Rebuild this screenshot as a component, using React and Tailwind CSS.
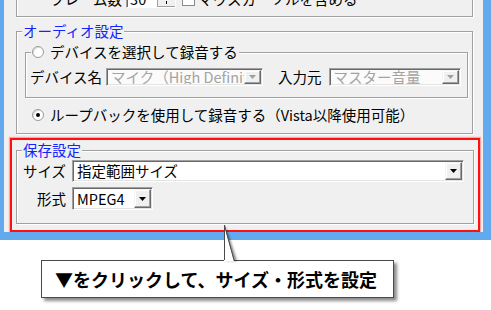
import React from "react";

const font = "font-['Noto_Sans_CJK_JP','Noto_Sans_CJK_SC',sans-serif]";

function DropButton({ disabled }) {
  return (
    <div className="w-[17px] shrink-0 flex items-center justify-center bg-[#f0f0f0] border border-t-[#f4f4f4] border-l-[#f4f4f4] border-b-[#6a6a6a] border-r-[#6a6a6a] shadow-[inset_-1px_-1px_0_#a0a0a0,inset_1px_1px_0_#fff]">
      <svg width="7" height="4" viewBox="0 0 7 4">
        <polygon points="0,0 7,0 3.5,4" fill={disabled ? "#a0a0a0" : "#000"} />
      </svg>
    </div>
  );
}

function Combo({ text, width, height = 18, disabled }) {
  return (
    <div
      className={`flex items-stretch border border-t-[#a0a0a0] border-l-[#a0a0a0] border-b-white border-r-white shadow-[inset_1px_1px_0_#696969,inset_-1px_-1px_0_#e3e3e3] p-[1px] ${
        disabled ? "bg-[#fbfbfb]" : "bg-white"
      }`}
      style={{ width, height }}
    >
      <div
        className={`flex-1 min-w-0 overflow-hidden whitespace-nowrap pl-[3px] flex items-center ${
          disabled ? "text-[#a3a3a3]" : "text-black"
        }`}
      >
        {text}
      </div>
      <DropButton disabled={disabled} />
    </div>
  );
}

function Radio({ checked }) {
  return (
    <span className="w-[12px] h-[12px] rounded-full border border-[#9a9a9a] bg-white flex items-center justify-center shrink-0 shadow-[inset_1px_1px_0_#dcdcdc]">
      {checked && <span className="w-[4px] h-[4px] rounded-full bg-black" />}
    </span>
  );
}

function Label({ children, blue, className = "" }) {
  return (
    <div
      className={`-mt-[9px] ml-[5px] w-fit px-[1px] h-[16px] leading-[16px] bg-[#f0f0f0] whitespace-nowrap ${
        blue ? "text-[#1424ff]" : "text-black"
      } ${className}`}
    >
      {children}
    </div>
  );
}

const group =
  "border border-[#a0a0a0] shadow-[inset_1px_1px_0_#fff,1px_1px_0_#fff]";

export default function App() {
  return (
    <div className={`relative w-[491px] h-[310px] bg-white overflow-hidden text-[14.5px] ${font}`}>
      <div className="w-[491px] h-[240px] border-l-[4px] border-r-[8px] border-b-[8px] border-[#62a9ee] bg-[#f0f0f0] overflow-hidden">
        {/* frame group (cut off at top) */}
        <div className={`${group} ml-[12px] w-[457px] h-[40px] -mt-[23px]`}>
          <div className="flex items-center pt-[12px] pl-[33px] h-[30px]">
            <span className="leading-[18px] whitespace-nowrap">フレーム数</span>
            <div className="ml-[4px] flex h-[18px] w-[50px] bg-white border border-t-[#a0a0a0] border-l-[#a0a0a0] border-b-white border-r-white shadow-[inset_1px_1px_0_#696969]">
              <span className="flex-1 pl-[3px] leading-[16px]">30</span>
              <div className="w-[18px] bg-[#f0f0f0] border-l border-b border-[#a0a0a0] flex items-end justify-center">
                <span className="w-[1px] h-[3px] bg-black mb-[2px]" />
              </div>
            </div>
            <span className="ml-[6px] w-[13px] h-[13px] bg-white border border-[#8a8a8a] shrink-0" />
            <span className="ml-[3px] whitespace-nowrap leading-[18px]">マウスカーソルを含める</span>
          </div>
        </div>

        {/* audio group */}
        <div className={`${group} ml-[12px] w-[457px] mt-[14px] pb-[9px]`}>
          <Label blue>オーディオ設定</Label>
          <div className={`${group} ml-[8px] w-[443px] mt-[13px] pb-[11px]`}>
            <Label className="flex items-center">
              <Radio />
              <span className="ml-[6px]">デバイスを選択して録音する</span>
            </Label>
            <div className="flex items-center mt-[8px] pl-[4px] h-[18px]">
              <span className="whitespace-nowrap">デバイス名</span>
              <div className="ml-[4px]">
                <Combo text="マイク（High Definition Audio デバイス）" width={157} disabled />
              </div>
              <span className="ml-[15px] whitespace-nowrap">入力元</span>
              <div className="ml-[7px]">
                <Combo text="マスター音量" width={132} disabled />
              </div>
            </div>
          </div>
          <div className="flex items-center mt-[8px] h-[18px] pl-[15px]">
            <Radio checked />
            <span className="ml-[6px] whitespace-nowrap">
              ループバックを使用して録音する（Vista以降使用可能）
            </span>
          </div>
        </div>

        {/* save group, highlighted */}
        <div className="ml-[6px] w-[470px] mt-[4px] border-2 border-[#ff1010] shadow-[0_0_1px_1px_rgba(255,120,120,0.6)] pb-[6px]">
          <div className={`${group} ml-[4px] w-[458px] mt-[10px] pb-[13px]`}>
            <Label blue>保存設定</Label>
            <div className="flex items-center mt-[2px] pl-[4px] h-[22px]">
              <span className="w-[45px] text-right whitespace-nowrap">サイズ</span>
              <div className="ml-[6px]">
                <Combo text="指定範囲サイズ" width={392} height={22} />
              </div>
            </div>
            <div className="flex items-center mt-[5px] pl-[4px] h-[23px]">
              <span className="w-[45px] text-right whitespace-nowrap">形式</span>
              <div className="ml-[6px]">
                <Combo text="MPEG4" width={81} height={23} />
              </div>
            </div>
          </div>
        </div>
      </div>

      {/* callout */}
      <div className="ml-[41px] mt-[20px] w-[353px] h-[38px] bg-white border border-[#4a4a4a] shadow-[3px_3px_3px_rgba(0,0,0,0.45)] flex items-center pl-[13px]">
        <span className="text-[18px] font-bold text-black whitespace-nowrap">
          ▼をクリックして、サイズ・形式を設定
        </span>
      </div>
      <svg className="absolute left-[214px] top-[220px]" width="30" height="45" viewBox="0 0 30 45">
        <defs>
          <filter id="sh" x="-50%" y="-50%" width="200%" height="200%">
            <feGaussianBlur stdDeviation="1.2" />
          </filter>
        </defs>
        <polygon points="12,7 12,41 23,41" fill="rgba(0,0,0,0.45)" filter="url(#sh)" />
        <polygon points="10,5 10,41.5 20,41.5" fill="#fff" />
        <line x1="10.5" y1="5" x2="10.5" y2="40" stroke="#4a4a4a" strokeWidth="1" />
        <line x1="10.5" y1="5" x2="20" y2="40" stroke="#4a4a4a" strokeWidth="1" />
      </svg>
    </div>
  );
}
